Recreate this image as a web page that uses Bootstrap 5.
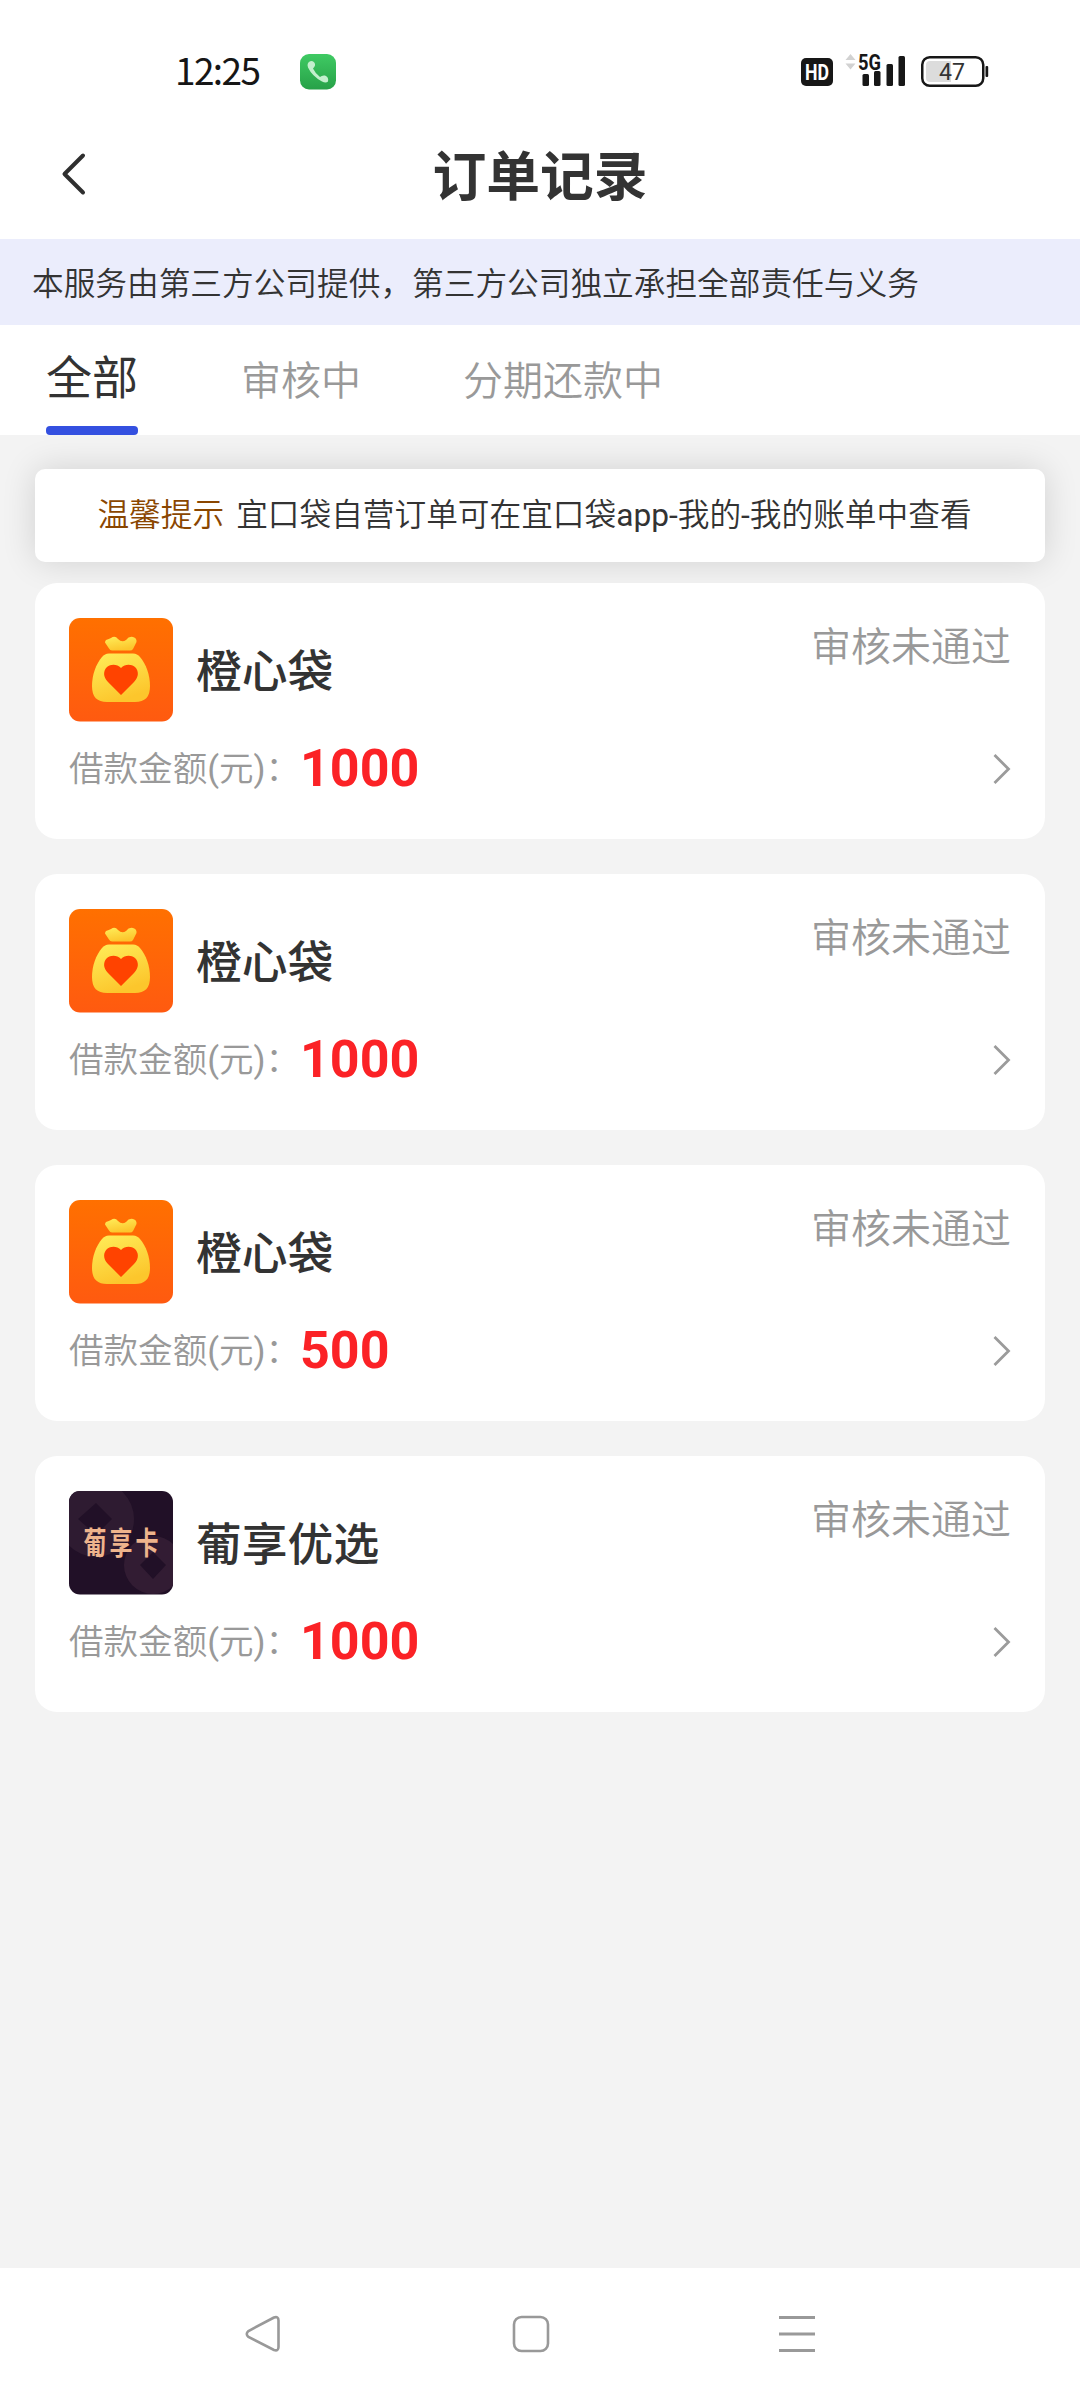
<!DOCTYPE html>
<html lang="zh-CN">
<head>
<meta charset="utf-8">
<meta name="viewport" content="width=device-width, initial-scale=1">
<title>订单记录</title>
<link href="https://cdn.jsdelivr.net/npm/bootstrap@5.3.0/dist/css/bootstrap.min.css" rel="stylesheet">
<style>
body{width:1080px;height:2400px;overflow:hidden;background:#f3f3f3;color:#333;font-family:Roboto,"Noto Sans CJK SC",sans-serif;line-height:1}
svg{display:block;flex:none}
.statusbar{height:112px;padding:44px 91px 0 175px}
.clock{font:400 37px/50px "Noto Sans CJK SC",sans-serif;width:125px;letter-spacing:-1.6px;color:#161616}
.call-icon{margin-top:10px}
.topbar{height:127px;padding:0 60px}
.topbar h1{font-size:53.8px;font-weight:700;line-height:80px;margin-top:2px}
.side{width:28px}
.disclaimer{height:86px;padding:3px 32px 0;background:#ebedfc;font-size:31.68px;line-height:86px;font-weight:350}
.tabs{height:110px;padding-left:46px}
.tabs .nav-link{padding:0;color:#999;font-size:40px;line-height:114px;font-weight:350}
.tabs .nav-link.active{color:#333;font-size:46px;line-height:107px;height:110px;font-weight:400}
.tabs .nav-link.active::after{content:"";display:block;height:9px;margin-top:-6px;border-radius:4px;background:#3450e0}
.tabs .gap-a{margin-left:103px}.tabs .gap-b{margin-left:102px}
.main-list{padding:34px 35px 0}
.notice{height:93px;border-radius:10px;padding-right:11px;font-size:31.68px;line-height:93px;box-shadow:0 0 34px rgba(0,0,0,.14);margin-bottom:21px;font-weight:350}
.notice b{font-weight:350;color:#8a4600;margin-right:12px}
.order{position:relative;height:256px;border:0;border-radius:22px;margin-bottom:35px;padding:35px 33px 0 34px}
.order-name{font-size:45.8px;line-height:109px;height:104px;margin-left:23px;font-weight:500}
.order-state{font-size:40px;line-height:59px;margin-right:1px;color:#999;font-weight:350}
.order-sum{height:94px}
.order-label{font-size:34.56px;color:#999;width:231px;white-space:nowrap;font-weight:350;padding-top:1px}
.order-amount{font-size:52px;font-weight:700;color:#fb2226}
.softnav{height:132px}
</style>
<script src="https://cdn.jsdelivr.net/npm/bootstrap@5.3.0/dist/js/bootstrap.bundle.min.js"></script>
</head>
<body class="d-flex flex-column">
<svg width="0" height="0" class="position-absolute">
<defs>
<linearGradient id="og" x1="0" y1="0" x2="0" y2="1"><stop offset="0" stop-color="#ff7000"/><stop offset="1" stop-color="#ff5a10"/></linearGradient>
<linearGradient id="yg" x1="0" y1="0" x2=".4" y2="1"><stop offset="0" stop-color="#ffee5a"/><stop offset="1" stop-color="#fcc62c"/></linearGradient>
<linearGradient id="gg" x1="0" y1="0" x2="0" y2="1"><stop offset="0" stop-color="#3fca63"/><stop offset="1" stop-color="#27a148"/></linearGradient>
<symbol id="bag" viewBox="0 0 104 104">
<rect width="104" height="103.500" rx="11" fill="url(#og)"/>
<path d="M37 22Q40 21 42 20Q46 17 49 21Q53 25 57 22Q60 18 64 19Q68 20 67.500 24L64 31Q63 32.500 61 32.500H43Q41 32.500 40 30.500L36 24.500Q36 23 37 22Z" fill="url(#yg)"/>
<path d="M40 35.500H64C67 35.500 69 37 71 39C77 46 81 57 81 68C81 79 76 84 66 84H38C28 84 23 79 23 68C23 57 27 46 33 39C35 37 37 35.500 40 35.500Z" fill="url(#yg)"/>
<path d="M52 77L39 64C34 59 34 53 38 49C42 46 48 46 52 50C56 46 62 46 66 49C70 53 70 59 65 64Z" fill="#ff4300"/>
</symbol>
<symbol id="chev" viewBox="0 0 20 32"><path d="M2.500 2L16.500 16L2.500 30" fill="none" stroke="#9b9b9b" stroke-width="2.800"/></symbol>
</defs>
</svg>

<header class="bg-white">
<div class="statusbar d-flex align-items-start">
<span class="clock">12:25</span>
<svg class="call-icon" width="36" height="36" viewBox="0 0 36 36"><rect width="36" height="35.500" rx="9" fill="url(#gg)"/><path d="M7.500 11Q8 7 12 7Q15.500 8 15 11.500Q14.500 13 13 14.500Q15 19 20 23Q22 21 25 21.500Q29 23 28 27.500Q26 29.500 22 27.500Q12 22 8 13.500Z" fill="#c3efcd"/></svg>
<svg class="ms-auto" width="188" height="50" viewBox="801 44 188 50" font-family="Roboto,sans-serif">
<rect x="801" y="58" width="32" height="28" rx="5" fill="#171717"/>
<text x="817" y="79.800" text-anchor="middle" font-size="22" font-weight="700" fill="#fff" textLength="24" lengthAdjust="spacingAndGlyphs">HD</text>
<path d="M845.500 60L850.500 54L855.500 60ZM845.500 63.500L850.500 69.500L855.500 63.500Z" fill="#d2d2d2"/>
<text x="858" y="69.500" font-size="21.500" font-weight="700" fill="#171717" textLength="23" lengthAdjust="spacingAndGlyphs">5G</text>
<g fill="#171717"><rect x="862.500" y="74" width="6.500" height="12" rx="1.500"/><rect x="874" y="71" width="6.500" height="15" rx="1.500"/><rect x="886.500" y="64" width="6.500" height="22" rx="1.500"/><rect x="898.500" y="56" width="6.500" height="30" rx="1.500"/><rect x="985.500" y="66" width="2.700" height="11" rx="1"/></g>
<rect x="922.250" y="57.250" width="61" height="28.500" rx="7.500" fill="#fff" stroke="#171717" stroke-width="2.500"/>
<path d="M951 61H930Q926 61 926 65V78Q926 82 930 82H951Z" fill="#dcdcdc"/>
<text x="952" y="80" text-anchor="middle" font-size="23.500" fill="#333" textLength="26" lengthAdjust="spacingAndGlyphs">47</text>
</svg>
</div>
<div class="topbar d-flex justify-content-between align-items-start">
<svg class="side" width="28" height="124" viewBox="60 112 28 124"><path d="M83 155.500L64.500 174L83 192.500" fill="none" stroke="#2f2f2f" stroke-width="4" stroke-linecap="round" stroke-linejoin="round"/></svg>
<h1 class="mb-0 pt-4">订单记录</h1>
<span class="side"></span>
</div>
</header>
<div class="disclaimer">本服务由第三方公司提供，第三方公司独立承担全部责任与义务</div>
<nav class="tabs nav bg-white flex-nowrap">
<a class="nav-link active">全部</a>
<a class="nav-link gap-a">审核中</a>
<a class="nav-link gap-b">分期还款中</a>
</nav>

<main class="main-list flex-grow-1">
<div class="notice bg-white d-flex justify-content-center text-nowrap"><b>温馨提示</b><span>宜口袋自营订单可在宜口袋<span class="fw-normal">app-</span>我的<span class="fw-normal">-</span>我的账单中查看</span></div>

<section class="order card">
<div class="d-flex"><svg width="104" height="104"><use href="#bag"/></svg><span class="order-name">橙心袋</span><span class="order-state ms-auto">审核未通过</span></div>
<div class="order-sum d-flex align-items-center"><span class="order-label">借款金额<span class="fw-normal">(</span>元<span class="fw-normal">)</span>：</span><span class="order-amount">1000</span><svg class="ms-auto" width="20" height="32"><use href="#chev"/></svg></div>
</section>
<section class="order card">
<div class="d-flex"><svg width="104" height="104"><use href="#bag"/></svg><span class="order-name">橙心袋</span><span class="order-state ms-auto">审核未通过</span></div>
<div class="order-sum d-flex align-items-center"><span class="order-label">借款金额<span class="fw-normal">(</span>元<span class="fw-normal">)</span>：</span><span class="order-amount">1000</span><svg class="ms-auto" width="20" height="32"><use href="#chev"/></svg></div>
</section>
<section class="order card">
<div class="d-flex"><svg width="104" height="104"><use href="#bag"/></svg><span class="order-name">橙心袋</span><span class="order-state ms-auto">审核未通过</span></div>
<div class="order-sum d-flex align-items-center"><span class="order-label">借款金额<span class="fw-normal">(</span>元<span class="fw-normal">)</span>：</span><span class="order-amount">500</span><svg class="ms-auto" width="20" height="32"><use href="#chev"/></svg></div>
</section>
<section class="order card">
<div class="d-flex">
<svg width="104" height="104" viewBox="0 0 104 104">
<clipPath id="cp"><rect width="104" height="103.500" rx="11"/></clipPath>
<g clip-path="url(#cp)"><rect width="104" height="104" fill="#211027"/>
<circle cx="27" cy="28" r="38" fill="#2e1b31"/><path d="M27 12L43 28L27 44L9 28Z" fill="#211027"/>
<circle cx="84" cy="74" r="29" fill="#321c33"/><path d="M84 61L97 74L84 88L71 74Z" fill="#211027"/></g>
<text transform="translate(14.500 63) scale(1 1.320)" font-family="Noto Sans CJK SC,sans-serif" font-size="23" font-weight="700" fill="#eeb48c" letter-spacing="3">葡享卡</text>
</svg>
<span class="order-name">葡享优选</span><span class="order-state ms-auto">审核未通过</span></div>
<div class="order-sum d-flex align-items-center"><span class="order-label">借款金额<span class="fw-normal">(</span>元<span class="fw-normal">)</span>：</span><span class="order-amount">1000</span><svg class="ms-auto" width="20" height="32"><use href="#chev"/></svg></div>
</section>
</main>

<footer class="softnav bg-white">
<svg width="1080" height="132" viewBox="0 2268 1080 132" fill="none" stroke="#999" stroke-width="2.600">
<path d="M274 2317.500L248.500 2331Q245 2334 248.500 2337L274 2350Q278.500 2351.500 278.500 2347V2320.500Q278.500 2316 274 2317.500Z"/>
<rect x="514" y="2317" width="34" height="34" rx="7.500"/>
<path d="M779 2317.500H815M779 2334H815M779 2350.500H815" stroke-width="3"/>
</svg>
</footer>
</body>
</html>
